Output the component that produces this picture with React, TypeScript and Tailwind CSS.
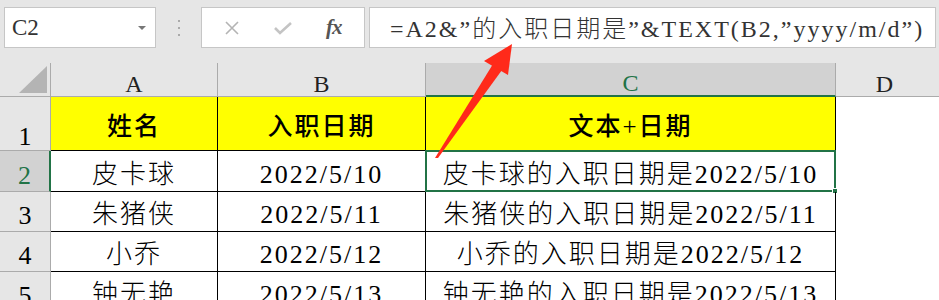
import React from "react";

const rows = [
  { n: "2", name: "皮卡球", date: "2022/5/10" },
  { n: "3", name: "朱猪侠", date: "2022/5/11" },
  { n: "4", name: "小乔", date: "2022/5/12" },
  { n: "5", name: "钟无艳", date: "2022/5/13" },
];

function FormulaBar() {
  return (
    <div className="h-[63px] bg-[#e6e6e6] flex items-start pt-[7px] pl-[4px] gap-0">
      {/* name box */}
      <div className="w-[152px] h-[41px] bg-white border border-[#c6c6c6] flex items-center justify-between pl-[7px] pr-[9px]">
        <span className="text-[23px] text-[#333] pt-[2px]">C2</span>
        <span className="w-0 h-0 border-l-[4px] border-r-[4px] border-t-[4px] border-l-transparent border-r-transparent border-t-[#777]" />
      </div>
      <div className="w-[45px] h-[41px] flex flex-col items-center justify-center gap-[5px]">
        <span className="w-[2px] h-[2px] bg-[#aaa]" />
        <span className="w-[2px] h-[2px] bg-[#aaa]" />
        <span className="w-[2px] h-[2px] bg-[#aaa]" />
      </div>
      {/* cancel / enter / fx */}
      <div className="w-[164px] h-[41px] bg-white border border-[#c6c6c6] flex items-center justify-around px-[6px]">
        <svg width="16" height="16" viewBox="0 0 16 16">
          <path d="M2 2L14 14M14 2L2 14" stroke="#b4b4b4" strokeWidth="1.6" />
        </svg>
        <svg width="20" height="16" viewBox="0 0 20 16">
          <path d="M2 8L7 13L18 3" stroke="#c4c4c4" strokeWidth="2.6" fill="none" />
        </svg>
        <span className="italic font-bold text-[21px] text-[#555] tracking-[-1px]">fx</span>
      </div>
      <div className="w-[4px]" />
      {/* formula */}
      <div className="flex-1 h-[41px] bg-white border border-[#c6c6c6] flex items-center pl-[20px] mr-[3px]">
        <span className="text-[24px] font-light text-[#333] tracking-[2px] whitespace-nowrap pt-[2px]">
          =A2&”的入职日期是”&TEXT(B2,”yyyy/m/d”)
        </span>
      </div>
    </div>
  );
}

function Arrow() {
  return (
    <svg className="absolute left-0 top-0 pointer-events-none" width="939" height="300" viewBox="0 0 939 300">
      <polygon points="435,158 438,158 502,70 493,64" fill="#ff2a1a" />
      <polygon points="512,44 484,61 508,75" fill="#ff2a1a" />
    </svg>
  );
}

export default function App() {
  const cell = "border-r border-b border-black flex items-end justify-center leading-none";
  const head = "border-b border-[#ababab] flex items-end justify-center text-[24px] leading-none";
  return (
    <div className="relative w-[939px] h-[300px] overflow-hidden bg-white [font-family:'Liberation_Serif','Noto_Sans_CJK_SC',serif] text-black">
      <FormulaBar />
      <div className="grid grid-cols-[51px_167px_208px_410px_1fr] grid-rows-[34px_54px_41px_40px_40px_40px]">
        {/* column headers */}
        <div className="relative bg-[#e6e6e6] border-r border-b border-[#ababab]">
          <svg className="absolute right-[3px] bottom-[3px]" width="28" height="27" viewBox="0 0 28 27">
            <polygon points="0,27 28,27 28,0" fill="#b4b4b4" />
          </svg>
        </div>
        <div className={`${head} bg-[#e6e6e6] border-r text-[#222]`}>A</div>
        <div className={`${head} bg-[#e6e6e6] border-r text-[#222]`}>B</div>
        <div className={`${head} bg-[#d2d2d2] border-r border-b-2 border-b-[#217346] text-[#217346]`}>C</div>
        <div className={`${head} bg-[#e6e6e6] text-[#222] pr-[6px] w-[103px]`}>D</div>

        {/* row 1 */}
        <div className="bg-[#e6e6e6] border-r border-b border-[#ababab] flex items-end justify-center leading-none text-[26px]">1</div>
        <div className={`${cell} bg-[#ffff00] text-[25px] font-medium tracking-[2px] pb-[11px]`}>姓名</div>
        <div className={`${cell} bg-[#ffff00] text-[25px] font-medium tracking-[2px] pb-[11px]`}>入职日期</div>
        <div className={`${cell} bg-[#ffff00] text-[25px] font-medium tracking-[2px] pb-[11px]`}>文本+日期</div>
        <div />

        {rows.map((r, i) => (
          <React.Fragment key={r.n}>
            <div
              className={
                i === 0
                  ? "bg-[#d2d2d2] border-b border-[#ababab] border-r-2 border-r-[#217346] flex items-end justify-center leading-none pb-[2px] text-[26px] text-[#217346]"
                  : "bg-[#e6e6e6] border-r border-b border-[#ababab] flex items-end justify-center leading-none pb-[2px] text-[26px]"
              }
            >
              {r.n}
            </div>
            <div className={`${cell} text-[26px] font-light tracking-[2px] pb-[3px]`}>{r.name}</div>
            <div className={`${cell} text-[26px] font-light tracking-[2px] pb-[3px]`}>{r.date}</div>
            <div className={`${cell} relative text-[26px] font-light tracking-[2px] pb-[3px]`}>
              {r.name}的入职日期是{r.date}
              {i === 0 && (
                <>
                  <div className="absolute -left-[1px] -top-[1px] -right-[1px] -bottom-[1px] border-2 border-[#217346]" />
                  <div className="absolute -right-[3px] -bottom-[3px] w-[6px] h-[6px] bg-[#217346] border border-white" />
                </>
              )}
            </div>
            <div />
          </React.Fragment>
        ))}
      </div>
      <Arrow />
    </div>
  );
}
